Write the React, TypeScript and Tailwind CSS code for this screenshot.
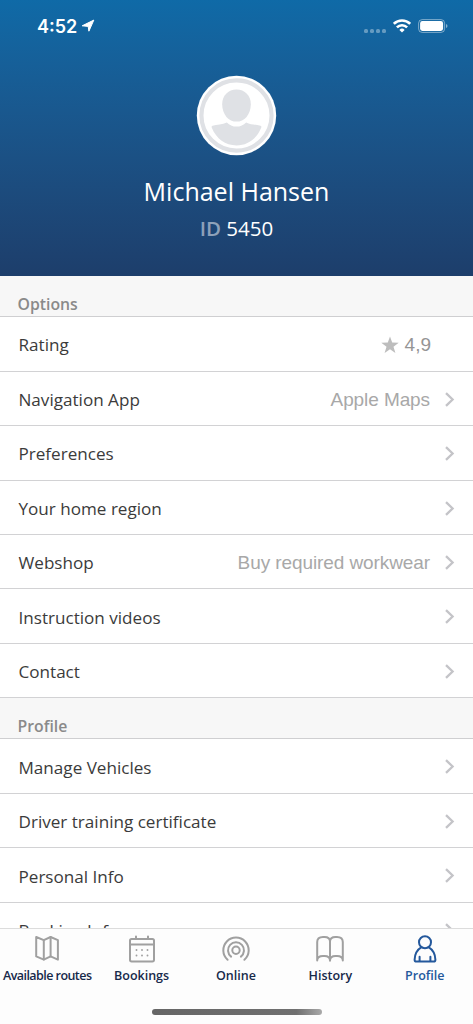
import type { ReactNode } from "react";

type Item = {
  label: string;
  value?: string;
  rating?: string;
};

const options: Item[] = [
  { label: "Rating", rating: "4,9" },
  { label: "Navigation App", value: "Apple Maps" },
  { label: "Preferences" },
  { label: "Your home region" },
  { label: "Webshop", value: "Buy required workwear" },
  { label: "Instruction videos" },
  { label: "Contact" },
];

const profile: Item[] = [
  { label: "Manage Vehicles" },
  { label: "Driver training certificate" },
  { label: "Personal Info" },
  { label: "Banking Info" },
];

const tabs: { label: string; icon: ReactNode; active?: boolean; tight?: boolean }[] = [
  {
    label: "Available routes",
    tight: true,
    icon: (
      <>
        <path d="M4.2 3v19.4l7.6 3.2 6.8-3.2 7.3 3.2V6.2L18.6 3l-6.8 3.2z" />
        <path d="M11.8 6.2v19.4M18.6 3v19.4" />
      </>
    ),
  },
  {
    label: "Bookings",
    icon: (
      <>
        <rect x="3" y="5" width="24" height="22.4" rx="1.6" />
        <path d="M3 10.4h24M9 2.6V5M21 2.6V5" />
        <path strokeWidth="1.9" d="M9.5 16h.01M15 16h.01M20.5 16h.01M9.5 21.5h.01M15 21.5h.01M20.5 21.5h.01" />
      </>
    ),
  },
  {
    label: "Online",
    icon: (
      <>
        <circle cx="15" cy="16.3" r="3.7" />
        <path d="M10.1 22.6a8 8 0 1 1 9.8 0" />
        <path d="M6.6 25.8a12.7 12.7 0 1 1 16.8 0" />
      </>
    ),
  },
  {
    label: "History",
    icon: (
      <>
        <path d="M15 7.5C15 4.5 12.5 3 9.5 3H8C4.5 3 2.2 4.8 2.2 8v18.600c0-3 2.300-4.600 5.800-4.600h1.500c3 0 5.500 1.600 5.500 4.600z" />
        <path d="M15 7.5C15 4.5 17.5 3 20.5 3H22c3.500 0 5.800 1.800 5.800 5v18.600c0-3-2.300-4.600-5.800-4.600h-1.500c-3 0-5.500 1.600-5.500 4.600" />
      </>
    ),
  },
  {
    label: "Profile",
    active: true,
    icon: (
      <>
        <circle cx="15" cy="8.2" r="6" />
        <path d="M11.5 13.2C7.5 15.6 4.8 19.8 4.6 25.7c0 1.2.7 1.9 1.9 1.9h17c1.2 0 1.9-.7 1.9-1.9-.2-5.900-2.900-10.100-6.900-12.500M9.600 27v-4.200M20.400 27v-4.200" />
      </>
    ),
  },
];

function StatusBar() {
  return (
    <div className="flex h-[52px] items-center justify-between pr-[25px] pl-[37px] text-white">
      <div className="flex items-center gap-1">
        <span className="pt-px font-[Inter] text-[18px] leading-[20px] font-semibold">4:52</span>
        <svg className="h-[14px] w-[14px]" viewBox="0 0 14 14" fill="currentColor" stroke="currentColor" strokeLinejoin="round">
          <path d="M12.8 1.1 7.9 12.2 7.2 7.4 1.2 6.8z" />
        </svg>
      </div>
      <div className="flex items-center">
        <div className="mt-[9px] mr-[7px] flex gap-[2px] opacity-35">
          {[0, 1, 2, 3].map((dot) => (
            <span key={dot} className="h-1 w-1 rounded-[1.5px] bg-white" />
          ))}
        </div>
        <svg className="mr-[7px] h-[14px] w-[18px]" viewBox="0 0 18 14" fill="none" stroke="currentColor" strokeWidth="2.6">
          <path d="M.8 4.9a11.6 11.6 0 0 1 16.4 0M3.9 8.3a7.2 7.2 0 0 1 10.2 0" />
          <path d="M9 13.5 6.4 10.9a3.7 3.7 0 0 1 5.2 0z" fill="currentColor" stroke="none" />
        </svg>
        <svg className="h-[14px] w-[30px]" viewBox="0 0 30 14" fill="none">
          <rect x=".6" y=".6" width="26" height="12.8" rx="3.6" stroke="#fff" strokeOpacity=".45" />
          <rect x="2.1" y="2.1" width="23" height="9.8" rx="2.3" fill="#fff" />
          <path d="M28 4.9q1.5.5 1.5 2.1T28 9.1z" fill="#fff" fillOpacity=".5" />
        </svg>
      </div>
    </div>
  );
}

function Avatar() {
  return (
    <svg className="mt-[23px] h-[81px] w-[81px]" viewBox="0 0 82 82">
      <circle cx="41" cy="41" r="40.2" fill="#fff" />
      <circle cx="41" cy="41" r="35.5" fill="none" stroke="#dfe1e5" strokeWidth="4.2" />
      <path d="M41 14.8c8.5 0 14.5 6.3 14.5 14.7 0 10.5-6.7 17.7-14.5 17.7s-14.5-7.2-14.5-17.7c0-8.4 6-14.7 14.5-14.7z" fill="#dfe1e5" />
      <path d="M31.2 48c2.7 2.8 5.9 4.2 9.8 4.2s7.1-1.4 9.8-4.2c4.5 2.3 10 2.2 14.5 3.3 1 .3 1.1 1.1.7 2.2C61.5 64.6 52.2 71.3 41 71.3s-20.5-6.7-25-17.8c-.4-1.1-.3-1.9.7-2.2 4.5-1.1 10-1 14.5-3.3z" fill="#dfe1e5" />
    </svg>
  );
}

function Section({ title, items }: { title: string; items: Item[] }) {
  return (
    <section>
      <h2 className="flex h-[41.2px] items-end border-b border-[#cfcfd1] bg-[#f7f7f7] pl-[17.5px] text-[15.8px] leading-[24.4px] font-semibold text-[#8a8a8a]">
        {title}
      </h2>
      {items.map((item) => (
        <div key={item.label} className="flex h-[54.45px] items-center border-b border-[#d2d2d4] pt-[2.6px] pr-[18px] pl-[18.5px]">
          <span className="flex-1 text-[17.1px] text-[#3b3b3b]">{item.label}</span>
          {item.rating && (
            <span className="mr-[24px] flex items-center gap-[6px] font-['Liberation_Sans'] text-[19px] text-[#959595]">
              <svg className="h-[18px] w-[18px]" viewBox="0 0 18 18" fill="#bdbdbd">
                <path d="m9 .4 2.2 6.1 6.5.2-5.2 4 1.9 6.300L9 13.300 3.600 17l1.900-6.300-5.200-4 6.500-.2z" />
              </svg>
              <span className="pt-px">{item.rating}</span>
            </span>
          )}
          {item.value && (
            <span className="mr-[14px] pt-px font-['Liberation_Sans'] text-[19px] tracking-[-0.09px] text-[#a8a8a8]">{item.value}</span>
          )}
          {!item.rating && (
            <svg className="mb-px h-[15px] w-[11px]" viewBox="0 0 11 15" fill="none" stroke="#c4c4c8" strokeWidth="2.3">
              <path d="m2 1.2 6.6 6.3L2 13.8" />
            </svg>
          )}
        </div>
      ))}
    </section>
  );
}

export default function App() {
  return (
    <div className="flex h-screen flex-col overflow-hidden bg-white font-['Open_Sans',sans-serif]">
      <header className="h-[276px] shrink-0 bg-linear-to-b from-[#0f6aa7] to-[#1d3e6b]">
        <StatusBar />
        <div className="flex flex-col items-center text-white">
          <Avatar />
          <h1 className="mt-[17px] text-[25px] leading-[36px]">Michael Hansen</h1>
          <p className="mt-[4px] text-[20.5px] leading-[30px]">
            <span className="font-semibold text-white/50">ID</span> 5450
          </p>
        </div>
      </header>

      <main className="min-h-0 flex-1 overflow-hidden">
        <Section title="Options" items={options} />
        <Section title="Profile" items={profile} />
      </main>

      <nav className="h-[96px] shrink-0 border-t border-[#dcdcdc] bg-[#fdfdfd]">
        <div className="mr-px grid grid-cols-5 pt-[5px]">
          {tabs.map((tab) => (
            <div key={tab.label} className={tab.active ? "flex flex-col items-center text-[#24589c]" : "flex flex-col items-center text-[#17294a]"}>
              <svg
                className={tab.active ? "h-[30px] w-[30px]" : "h-[30px] w-[30px] text-[#a0a0a0]"}
                viewBox="0 0 30 30"
                fill="none"
                stroke="currentColor"
                strokeWidth="2"
                strokeLinecap="round"
                strokeLinejoin="round"
              >
                {tab.icon}
              </svg>
              <span
                className={
                  tab.tight
                    ? "mt-[3px] text-[12.5px] leading-[18px] font-semibold tracking-[-0.55px] whitespace-nowrap"
                    : "mt-[3px] text-[12.5px] leading-[18px] font-semibold whitespace-nowrap"
                }
              >
                {tab.label}
              </span>
            </div>
          ))}
        </div>
        <div className="mx-auto mt-[24px] h-[6px] w-[170px] rounded-full bg-linear-to-r from-[#666] via-[#707070] via-85% to-[#aaa]" />
      </nav>
    </div>
  );
}
